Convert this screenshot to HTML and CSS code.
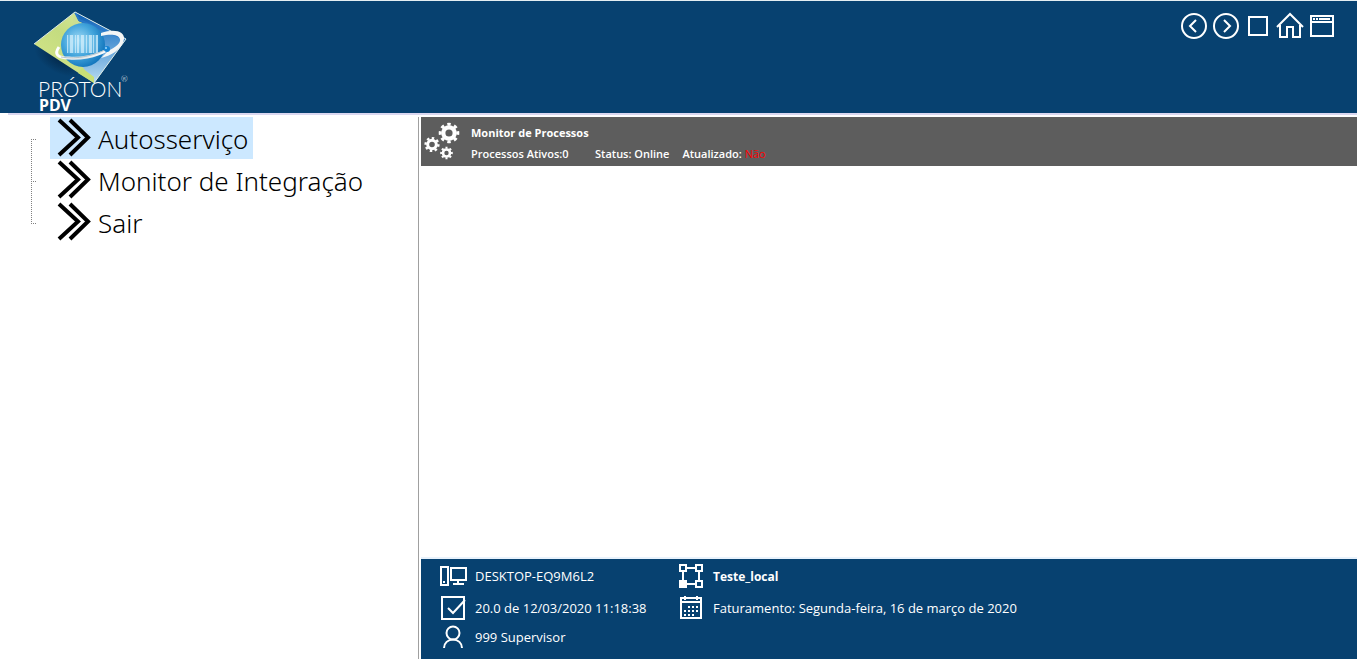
FILE: index.html
```html
<!DOCTYPE html>
<html lang="pt-BR">
<head>
<meta charset="utf-8">
<meta name="viewport" content="width=device-width, initial-scale=1">
<title>Próton PDV</title>
<link rel="stylesheet" href="styles.css">
</head>
<body>
<header class="topbar">
  <div class="brand">
    <svg class="brand-mark" viewBox="0 0 96 76" aria-hidden="true">
      <defs>
        <linearGradient id="leaf" x1="0" y1="1" x2="1" y2="0"><stop offset="0" stop-color="#d9e88a"/><stop offset=".5" stop-color="#c4dc80"/><stop offset="1" stop-color="#e6f0b0"/></linearGradient>
        <linearGradient id="sky" x1="0" y1="0" x2="0" y2="1"><stop offset="0" stop-color="#0a5cb4"/><stop offset=".4" stop-color="#4b93d2"/><stop offset="1" stop-color="#b9dcf3"/></linearGradient>
        <radialGradient id="globe" cx=".4" cy=".4" r=".65"><stop offset="0" stop-color="#a4dcf6"/><stop offset=".55" stop-color="#43a5dc"/><stop offset="1" stop-color="#0f72ba"/></radialGradient>
        <linearGradient id="ring" x1="0" y1="0" x2="1" y2="0"><stop offset="0" stop-color="#fff"/><stop offset=".5" stop-color="#dfe6e9"/><stop offset="1" stop-color="#fff"/></linearGradient>
        <radialGradient id="shade"><stop offset="0" stop-color="#021d38" stop-opacity=".7"/><stop offset="1" stop-color="#021d38" stop-opacity="0"/></radialGradient>
      </defs>
      <ellipse cx="28" cy="50" rx="28" ry="15" fill="url(#shade)" transform="rotate(28 28 50)"/>
      <path d="M43 4 94 31 62 75 2 36Z" fill="url(#leaf)"/>
      <path d="M43 4 94 31 62 75 52 61 40 45 47 14Z" fill="url(#sky)"/>
      <path d="M42 4 46 13 53 16 52 23 40 25Z" fill="#cbdf91"/>
      <path d="M43 4 47 12 93 31" fill="none" stroke="#2878c8" stroke-width="2"/>
      <path d="M2 36 43 4 94 31 62 75" fill="none" stroke="#dce9e8" stroke-width="1"/>
      <path d="M50 60 62 69 62 75 46 65Z" fill="#c8df76"/>
      <circle cx="51" cy="37" r="22" fill="url(#globe)"/>
      <path d="M35 27h31v18H35z" fill="#8fd0f0" opacity=".45"/>
      <path d="M35 27h1v18h-1zM38 27h3v18h-3zM43 27h1v18h-1zM45 27h2v18h-2zM49 27h3v18h-3zM54 27h1v18h-1zM57 27h3v18h-3zM61 27h1v18h-1zM64 27h2v18h-2z" fill="#e4f6ff" opacity=".6"/>
      <path d="M69 25C83 20 93 24 92 31 90 42 78 48 69 50L76 43C84 39 89 35 88 31 86 26 78 26 69 28Z" fill="#f4f6f6"/>
      <path d="M75 42C63 49 47 51 37 50 25 50 22 46 27 39" fill="none" stroke="url(#ring)" stroke-width="3"/>
      <path d="M29 49C45 52 63 47 73 42" fill="none" stroke="#a6b7bf" stroke-width=".8"/>
      <circle cx="75" cy="41" r="3" fill="#1583d3"/><circle cx="74" cy="40" r="1" fill="#9edcff"/>
    </svg>
    <div class="brand-name">PRÓTON</div>
    <div class="brand-reg">®</div>
    <div class="brand-product">PDV</div>
  </div>
  <nav class="tools" aria-label="Navegação">
    <button type="button" aria-label="Voltar"><svg class="icon" viewBox="0 0 28 28"><circle cx="14" cy="14" r="12"/><path d="m16 8-6 6 6 6"/></svg></button>
    <button type="button" aria-label="Avançar"><svg class="icon" viewBox="0 0 28 28"><circle cx="14" cy="14" r="12"/><path d="m12 8 6 6-6 6"/></svg></button>
    <button type="button" aria-label="Parar"><svg class="icon" viewBox="0 0 28 28"><path d="M5 5h18v18H5z"/></svg></button>
    <button type="button" aria-label="Início"><svg class="icon" viewBox="0 0 28 28"><path d="M1 15 14 2l13 13M4 13v12h7V15h6v10h7V13"/></svg></button>
    <button type="button" aria-label="Janela"><svg class="icon" viewBox="0 0 28 28"><path d="M3 4h22v20H3zM3 10h22M11 7h11M5 7h2M8 7h2"/></svg></button>
  </nav>
</header>
<div class="workspace">
  <nav class="menu" aria-label="Menu principal">
    <ul class="tree">
      <li><button type="button" class="entry selected"><svg class="chevrons" viewBox="0 0 34 42" aria-hidden="true"><path d="m2 3 19 17.500L2 38M13 3l18 17.500L13 38"/></svg>Autosserviço</button></li>
      <li><button type="button" class="entry"><svg class="chevrons" viewBox="0 0 34 42" aria-hidden="true"><path d="m2 3 19 17.500L2 38M13 3l18 17.500L13 38"/></svg>Monitor de Integração</button></li>
      <li><button type="button" class="entry"><svg class="chevrons" viewBox="0 0 34 42" aria-hidden="true"><path d="m2 3 19 17.500L2 38M13 3l18 17.500L13 38"/></svg>Sair</button></li>
    </ul>
  </nav>
  <main class="content">
    <section class="monitor">
      <svg class="gears" viewBox="0 0 38 40" aria-hidden="true">
        <g fill="none" stroke="#fff">
          <circle cx="25" cy="12" r="5.700" stroke-width="4.200"/>
          <circle cx="25" cy="12" r="8.800" stroke-width="3" pathLength="16" stroke-dasharray="1" stroke-dashoffset=".5"/>
          <circle cx="8" cy="23.500" r="4.300" stroke-width="3"/>
          <circle cx="8" cy="23.500" r="6.400" stroke-width="2.400" pathLength="16" stroke-dasharray="1" stroke-dashoffset=".1"/>
          <circle cx="22.500" cy="32" r="3.500" stroke-width="2.600"/>
          <circle cx="22.500" cy="32" r="5.300" stroke-width="2" pathLength="16" stroke-dasharray="1" stroke-dashoffset=".5"/>
        </g>
      </svg>
      <div class="monitor-text">
        <h1>Monitor de Processos</h1>
        <div class="stats">
          <span class="processes">Processos Ativos:0</span>
          <span>Status: Online</span>
          <span>Atualizado: <em>Não</em></span>
        </div>
      </div>
    </section>
    <footer class="status">
      <div class="group">
        <div class="info"><svg class="icon" viewBox="0 0 28 28"><path d="M2 5h7v18H2zM12 6h15v12H12zM19 18v4M14 22h11M5 19v2"/></svg>DESKTOP-EQ9M6L2</div>
        <div class="info"><svg class="icon" viewBox="0 0 28 28"><path d="M3 3h22v22H3z"/><path d="m9 14 5 5L26 6"/></svg>20.0 de 12/03/2020 11:18:38</div>
        <div class="info short"><svg class="icon" viewBox="0 0 28 28"><circle cx="14" cy="10" r="6.500"/><path d="M5 25c0-5 4-8.500 9-8.500s9 3.500 9 8.500"/></svg>999 Supervisor</div>
      </div>
      <div class="group">
        <div class="info"><svg class="icon" viewBox="0 0 28 28"><path d="M3 3h6v6H3zM19 3h6v6h-6zM19 19h6v6h-6zM9 6h10M9 22h10M6 9v10M22 9v10"/><path d="M3 19h6v6H3z" fill="#fff"/></svg><strong>Teste_local</strong></div>
        <div class="info"><svg class="icon" viewBox="0 0 28 28"><path d="M4 4h20v20H4zM4 8h20M8 2v4M20 2v4"/><path d="M11 13h12M7 17h16M7 21h12" stroke-dasharray="2"/></svg>Faturamento: Segunda-feira, 16 de março de 2020</div>
      </div>
    </footer>
  </main>
</div>
</body>
</html>
```
FILE: styles.css
```css
* { box-sizing: border-box; }

body {
  margin: 0;
  min-height: 100vh;
  padding-bottom: 1px;
  display: flex;
  flex-direction: column;
  background: #fff;
  font-family: "Open Sans", "Noto Sans", sans-serif;
}

button {
  margin: 0;
  padding: 0;
  border: 0;
  background: none;
  font: inherit;
  color: inherit;
  cursor: pointer;
}

svg { display: block; flex: none; }

.icon {
  width: 28px;
  height: 28px;
  fill: none;
  stroke: #fff;
  stroke-width: 2;
}

.topbar {
  height: 113px;
  display: flex;
  justify-content: space-between;
  align-items: flex-start;
  padding: 7px 21px 0 32px;
  border-top: 1px solid #e4eef2;
  background: #074170;
  color: #fff;
}

.brand { position: relative; width: 96px; }
.brand-mark { width: 96px; height: 76px; }

.brand-name {
  position: absolute;
  top: 72px;
  left: 6px;
  font: 300 21px/17px Lato, sans-serif;
}

.brand-reg {
  position: absolute;
  top: 67px;
  left: 89px;
  font: 300 8px/8px Lato, sans-serif;
}

.brand-product {
  position: absolute;
  top: 90px;
  left: 7px;
  font: 700 16px/14px "Noto Sans", sans-serif;
}

.tools { display: flex; gap: 4px; padding-top: 4px; }

.workspace {
  flex: 1;
  display: flex;
  margin-left: 8px;
  padding-top: 2px;
  border-top: 2px solid #dad7f0;
}

.menu {
  flex: 0 0 411px;
  padding-left: 23px;
  border-right: 1px solid #a0a0a0;
}

.tree {
  position: relative;
  margin: 0;
  padding: 0 0 0 19px;
  list-style: none;
}

.tree::before {
  content: "";
  position: absolute;
  top: 22px;
  bottom: 19px;
  left: 0;
  border-left: 1px dotted #808080;
}

.tree li { position: relative; display: flex; }

.tree li::before {
  content: "";
  position: absolute;
  top: 22px;
  left: -19px;
  width: 5px;
  border-top: 1px dotted #808080;
}

.entry {
  height: 42px;
  display: flex;
  align-items: flex-start;
  gap: 7px;
  padding: 0 5px 0 7px;
  color: #000;
  font-family: "Noto Sans", "Open Sans", sans-serif;
  font-size: 26px;
  font-weight: 300;
  line-height: 44px;
  white-space: nowrap;
}

.entry.selected { background: #cce8ff; }

.chevrons {
  width: 34px;
  height: 42px;
  fill: none;
  stroke: #000;
  stroke-width: 4;
}

.content {
  flex: 1;
  min-width: 0;
  margin-left: 2px;
  display: flex;
  flex-direction: column;
  justify-content: space-between;
}

.monitor {
  display: flex;
  padding: 4px 4px 5px 3px;
  background: #5d5d5d;
  color: #fff;
}

.gears { width: 38px; height: 40px; }
.monitor-text { padding-left: 9px; font-size: 11px; font-weight: 600; }

.monitor h1 {
  margin: 0 0 5px;
  font-size: 11px;
  line-height: 24px;
  font-weight: 700;
}

.stats { display: flex; line-height: 8px; white-space: pre; }
.stats span { margin-right: 13px; }
.stats .processes { width: 111px; }
.stats em { color: #f00; font-style: normal; font-weight: 400; }

.status {
  min-height: 102px;
  display: flex;
  padding: 1px 18px 0;
  border-top: 2px solid #e8f2fc;
  background: #074170;
  color: #fff;
  font-size: 13px;
}

.group { display: flex; flex-direction: column; min-width: 238px; }

.info {
  height: 32px;
  display: flex;
  align-items: center;
  gap: 8px;
  white-space: nowrap;
}

.info strong { font-size: 12px; }
.info.short { height: 26px; }
```
